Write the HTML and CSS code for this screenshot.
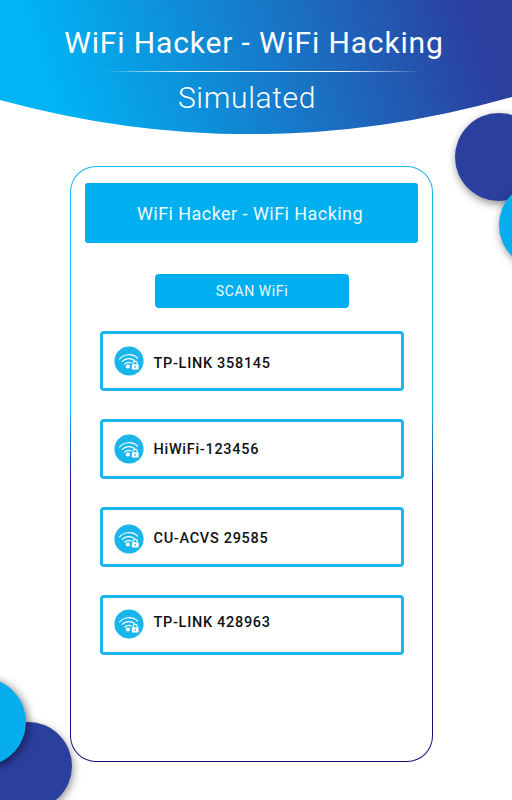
FILE: index.html
```html
<!DOCTYPE html>
<html>
<head>
<meta name="viewport" content="width=device-width, initial-scale=1">
<link rel="stylesheet" href="styles.css">
</head>
<body>

<svg class="blobs" width="512" height="800" viewBox="0 0 512 800">
  <circle class="blob-navy" cx="499" cy="157" r="44"></circle>
  <circle class="blob-cyan" cx="543" cy="225" r="44"></circle>
  <circle class="blob-navy" cx="28" cy="766" r="44"></circle>
  <circle class="blob-cyan" cx="-18" cy="722" r="44"></circle>
</svg>

<div class="header">
  <h1 class="title">WiFi Hacker - WiFi Hacking</h1>
  <div class="divider"></div>
  <h2 class="subtitle">Simulated</h2>
</div>

<div class="phone">
  <div class="banner">WiFi Hacker - WiFi Hacking</div>
  <button class="scan">SCAN WiFi</button>

  <div class="network">
    <svg class="wifi" viewBox="0 0 30 30"><use href="#wifi-lock"></use></svg>
    <span class="name name-1">TP-LINK 358145</span>
  </div>
  <div class="network">
    <svg class="wifi" viewBox="0 0 30 30"><use href="#wifi-lock"></use></svg>
    <span class="name">HiWiFi-123456</span>
  </div>
  <div class="network">
    <svg class="wifi wifi-3" viewBox="0 0 30 30"><use href="#wifi-lock"></use></svg>
    <span class="name name-3">CU-ACVS 29585</span>
  </div>
  <div class="network">
    <svg class="wifi wifi-4" viewBox="0 0 30 30"><use href="#wifi-lock"></use></svg>
    <span class="name name-4">TP-LINK 428963</span>
  </div>
</div>

<svg class="defs" width="0" height="0">
  <symbol id="wifi-lock" viewBox="0 0 30 30">
    <circle cx="15" cy="15" r="14.6" fill="#19b5ec"></circle>
    <g fill="none" stroke="#fff" stroke-width="1.2" stroke-linecap="round">
      <path d="M5.6 12.8C10.5 7.6 18.5 7.4 23.4 12"></path>
      <path d="M8.2 15.4C11.5 12 17 11.8 20.4 14.4"></path>
      <path d="M10.8 18C12.6 16.4 15.2 16 17.2 17"></path>
    </g>
    <circle cx="13.8" cy="20.4" r="2.1" fill="#fff"></circle>
    <path d="M19.2 18.6v-1.2a2 2 0 0 1 4 0v1.2" fill="none" stroke="#fff" stroke-width="1.1"></path>
    <rect x="17.8" y="18.2" width="6.8" height="5.4" rx=".7" fill="#fff"></rect>
    <circle cx="21.2" cy="20.9" r=".8" fill="#19b5ec"></circle>
  </symbol>
</svg>

</body>
</html>
```

FILE: styles.css
```css
html, body {
  margin: 0;
  padding: 0;
}

body {
  position: relative;
  width: 512px;
  height: 800px;
  overflow: hidden;
  background: #fff;
  font-family: Roboto, "Liberation Sans", sans-serif;
}

.defs {
  position: absolute;
}

/* circles on the edges */
.blobs {
  position: absolute;
  left: 0;
  top: 0;
}

.blob-navy {
  fill: #2b3f9f;
  filter: drop-shadow(1px 3px 4px rgba(0,0,0,.45));
}

.blob-cyan {
  fill: #06aef0;
  filter: drop-shadow(2px 2px 5px rgba(0,0,0,.55));
}

/* header */
.header {
  position: relative;
  height: 134px;
  padding-top: 22px;
  box-sizing: border-box;
  display: flex;
  flex-direction: column;
  align-items: center;
  color: #fff;
  background: linear-gradient(72deg, #00b4f5 12%, #1a70c2 60%, #2b3f9f 92%);
  clip-path: path("M0 0H512V97Q256 170 0 100Z");
}

.title {
  margin: 0 4px 0 0;
  font-size: 30px;
  line-height: 42px;
  font-weight: 400;
  letter-spacing: .85px;
}

.divider {
  width: 318px;
  height: 1px;
  margin: 7px 0 0 14px;
  background: linear-gradient(90deg, rgba(255,255,255,0), #fff 25%, #fff 75%, rgba(255,255,255,0));
}

.subtitle {
  margin: 5px 18px 0 0;
  font-size: 30px;
  line-height: 42px;
  font-weight: 300;
  letter-spacing: .65px;
}

/* phone outline */
.phone {
  position: relative;
  width: 363px;
  height: 596px;
  box-sizing: border-box;
  margin: 32px 0 0 70px;
  padding: 16px 14px 0;
  border: 1.5px solid transparent;
  border-radius: 26px;
  background:
    linear-gradient(#fff, #fff) padding-box,
    linear-gradient(180deg, #19b5ec 41%, #14147c 53%) border-box;
  display: flex;
  flex-direction: column;
  align-items: center;
}

.banner {
  width: 333px;
  height: 60px;
  flex-shrink: 0;
  box-sizing: border-box;
  padding-right: 3px;
  border-radius: 3px;
  background: #00aff0;
  color: #eefaff;
  font-size: 18px;
  letter-spacing: .45px;
  display: flex;
  align-items: center;
  justify-content: center;
}

.scan {
  width: 194px;
  height: 34px;
  margin: 31px 0 23px 1px;
  padding: 0;
  border: 0;
  border-radius: 4px;
  background: #00aff0;
  color: #eefaff;
  font-family: inherit;
  font-size: 14px;
  letter-spacing: .6px;
}

.network {
  width: 304px;
  height: 60px;
  flex-shrink: 0;
  box-sizing: border-box;
  margin-bottom: 28px;
  padding-left: 11px;
  border: 3.5px solid #19b5ec;
  border-radius: 4px;
  display: flex;
  align-items: center;
  gap: 10px;
  color: #111;
  font-size: 14.5px;
  font-weight: 500;
  letter-spacing: .7px;
}

.wifi {
  width: 30px;
  height: 30px;
  flex-shrink: 0;
}

/* the rows are not quite centred in the original */
.wifi-3 {
  margin-top: 4px;
}

.wifi-4 {
  margin-bottom: 3px;
}

.name-1 {
  margin-top: 4px;
}

.name-3 {
  margin-top: 2px;
}

.name-4 {
  margin-bottom: 5px;
}
```
